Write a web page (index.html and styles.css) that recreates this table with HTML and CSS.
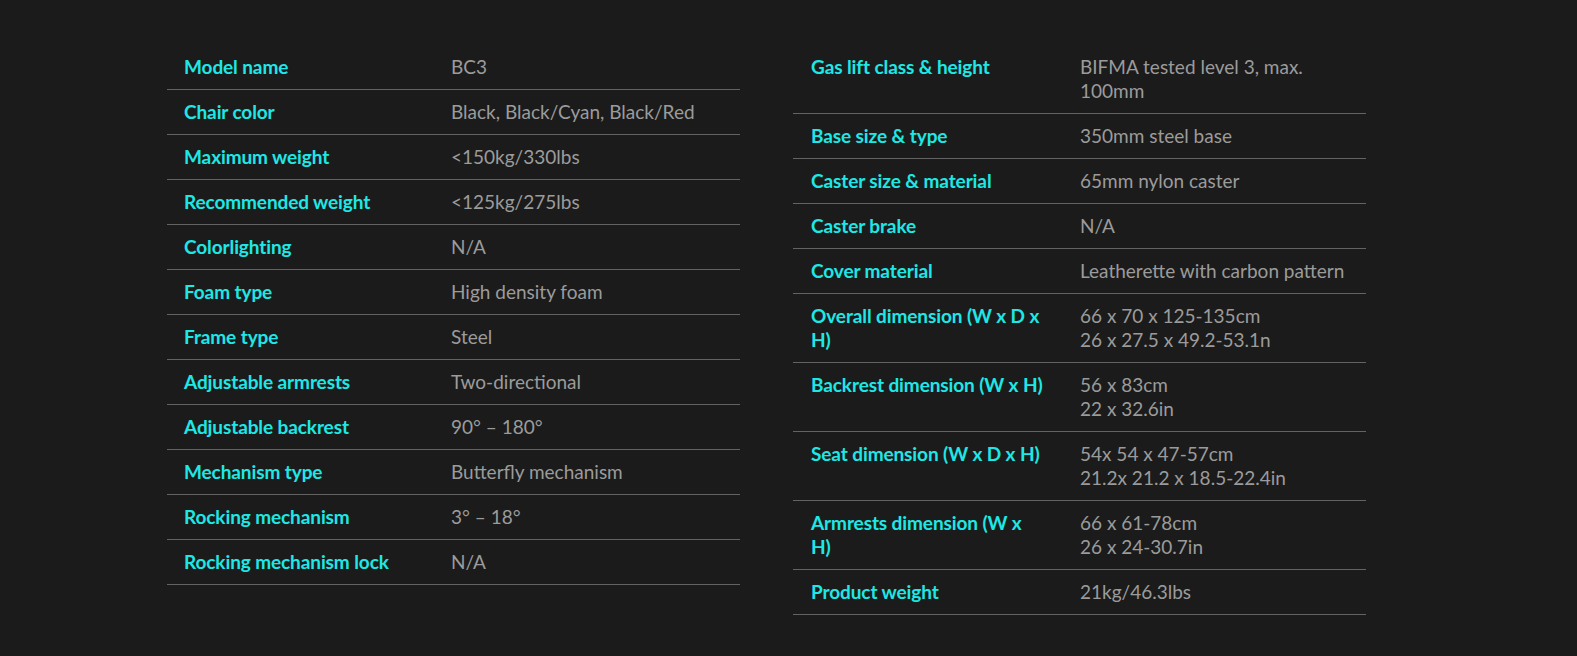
FILE: index.html
```html
<!DOCTYPE html>
<html lang="en">
<head>
<meta charset="utf-8">
<title>BC3 Specifications</title>
<link rel="stylesheet" href="styles.css">
</head>
<body>
<main class="specs">
  <dl class="spec-table">
    <div class="row"><dt>Model name</dt><dd>BC3</dd></div>
    <div class="row"><dt>Chair color</dt><dd>Black, Black/Cyan, Black/Red</dd></div>
    <div class="row"><dt>Maximum weight</dt><dd>&lt;150kg/330lbs</dd></div>
    <div class="row"><dt>Recommended weight</dt><dd>&lt;125kg/275lbs</dd></div>
    <div class="row"><dt>Colorlighting</dt><dd>N/A</dd></div>
    <div class="row"><dt>Foam type</dt><dd>High density foam</dd></div>
    <div class="row"><dt>Frame type</dt><dd>Steel</dd></div>
    <div class="row"><dt>Adjustable armrests</dt><dd>Two-directional</dd></div>
    <div class="row"><dt>Adjustable backrest</dt><dd>90° – 180°</dd></div>
    <div class="row"><dt>Mechanism type</dt><dd>Butterfly mechanism</dd></div>
    <div class="row"><dt>Rocking mechanism</dt><dd>3° – 18°</dd></div>
    <div class="row"><dt>Rocking mechanism lock</dt><dd>N/A</dd></div>
  </dl>
  <dl class="spec-table spec-table--right">
    <div class="row"><dt>Gas lift class &amp; height</dt><dd>BIFMA tested level 3, max.<br>100mm</dd></div>
    <div class="row"><dt>Base size &amp; type</dt><dd>350mm steel base</dd></div>
    <div class="row"><dt>Caster size &amp; material</dt><dd>65mm nylon caster</dd></div>
    <div class="row"><dt>Caster brake</dt><dd>N/A</dd></div>
    <div class="row"><dt>Cover material</dt><dd>Leatherette with carbon pattern</dd></div>
    <div class="row"><dt>Overall dimension (W x D x<br>H)</dt><dd>66 x 70 x 125-135cm<br>26 x 27.5 x 49.2-53.1n</dd></div>
    <div class="row"><dt>Backrest dimension (W x H)</dt><dd>56 x 83cm<br>22 x 32.6in</dd></div>
    <div class="row"><dt>Seat dimension (W x D x H)</dt><dd>54x 54 x 47-57cm<br>21.2x 21.2 x 18.5-22.4in</dd></div>
    <div class="row"><dt>Armrests dimension (W x<br>H)</dt><dd>66 x 61-78cm<br>26 x 24-30.7in</dd></div>
    <div class="row"><dt>Product weight</dt><dd>21kg/46.3lbs</dd></div>
  </dl>
</main>
</body>
</html>
```

FILE: styles.css
```css
html, body {
  margin: 0;
  padding: 0;
  background: #1b1b1b;
}
body {
  font-family: Lato, "Open Sans", sans-serif;
  font-size: 19px;
  line-height: 24px;
}
.specs {
  display: flex;
  gap: 53px;
  padding: 45px 0 0 167px;
}
.spec-table {
  width: 573px;
  margin: 0;
}
.row {
  display: grid;
  grid-template-columns: 284px 1fr;
  padding: 10px 0;
  border-bottom: 1px solid #636363;
}
.spec-table--right .row {
  grid-template-columns: 287px 1fr;
}
.spec-table--right dt {
  padding-left: 18px;
}
dt {
  padding: 0 20px 0 17px;
  color: #1ee8e6;
  font-weight: 700;
  letter-spacing: -0.1px;
}
dd {
  margin: 0;
  color: #9b9b9b;
}
```
